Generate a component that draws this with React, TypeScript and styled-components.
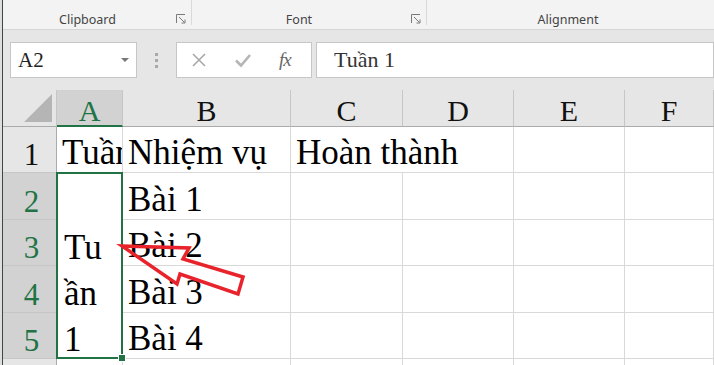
import styled, { createGlobalStyle } from "styled-components";

const GREEN = "#217346";
const SERIF = `"Liberation Serif", "Times New Roman", serif`;
const UI = `"Noto Sans", "Liberation Sans", sans-serif`;

const GlobalStyle = createGlobalStyle`
  html, body {
    margin: 0;
    padding: 0;
    background: #e4e4e4;
    overflow: hidden;
  }
`;

const Frame = styled.div`
  width: 714px;
  height: 365px;
  padding-left: 2px;
  box-sizing: border-box;
  background: #dedede;
  overflow: hidden;
`;

const Window = styled.div`
  height: 100%;
  border-left: 1px solid #3b4a40;
  display: flex;
  flex-direction: column;
  background: #e6e6e6;
`;

const Ribbon = styled.div`
  flex-shrink: 0;
  display: flex;
  height: 30px;
  background: #f3f3f3;
  border-bottom: 1px solid #d5d5d5;
  box-sizing: border-box;
`;

const Group = styled.div<{ $w?: number }>`
  display: flex;
  align-items: flex-end;
  ${(p) => (p.$w ? `width: ${p.$w}px;` : "flex: 1;")}
  padding: 0 4px 2px 0;
  box-sizing: border-box;
  & + & {
    background: linear-gradient(#dadada, #dadada) left top / 1px 25px no-repeat;
  }
`;

const GroupLabel = styled.span`
  flex: 1;
  text-align: center;
  font-family: ${UI};
  font-size: 12.5px;
  line-height: 15px;
  color: #444;
`;

const Launcher = styled.svg`
  width: 10px;
  height: 10px;
  margin: 0 1px 3px 4px;
`;

const FormulaBar = styled.div`
  flex-shrink: 0;
  display: flex;
  align-items: center;
  padding: 12px 0 12px 7px;
  height: 60px;
  box-sizing: border-box;
`;

const Field = styled.div<{ $w?: number }>`
  display: flex;
  align-items: center;
  height: 36px;
  box-sizing: border-box;
  background: #fff;
  border: 1px solid #c6c6c6;
  ${(p) => (p.$w ? `width: ${p.$w}px;` : "flex: 1;")}
`;

const NameText = styled.span`
  flex: 1;
  padding-left: 7px;
  font-family: ${SERIF};
  font-size: 21px;
  color: #222;
`;

const Caret = styled.span`
  width: 0;
  height: 0;
  border-left: 4px solid transparent;
  border-right: 4px solid transparent;
  border-top: 4px solid #777;
  margin-right: 7px;
`;

const Grip = styled.div`
  width: 39px;
  display: flex;
  flex-direction: column;
  align-items: center;
  gap: 3px;
  span {
    width: 3px;
    height: 3px;
    background: #a8a8a8;
  }
`;

const ToolButtons = styled(Field)`
  gap: 27px;
  padding-left: 14px;
  margin-right: 4px;
`;

const Fx = styled.span`
  font-family: ${SERIF};
  font-style: italic;
  font-size: 19px;
  color: #666;
  letter-spacing: -1px;
`;

const FormulaText = styled.span`
  padding-left: 17px;
  font-family: ${SERIF};
  font-size: 22px;
  color: #333;
`;

const Sheet = styled.div`
  position: relative;
  flex: 1;
  min-height: 0;
  display: grid;
  grid-template-columns: 54px 66px 168px 112px 111px 111px 1fr;
  grid-template-rows: 37px 46px 47px 46px 47px 46px 1fr;
  background: #fff;
`;

const Corner = styled.div`
  background: #e6e6e6;
  border-right: 1px solid #c6c6c6;
  border-bottom: 1px solid #ababab;
  display: flex;
  align-items: flex-end;
  justify-content: flex-end;
  padding: 0 4px 4px 0;
  box-sizing: border-box;
`;

const Triangle = styled.div`
  width: 0;
  height: 0;
  border-left: 28px solid transparent;
  border-bottom: 28px solid #b5b5b5;
`;

const ColHead = styled.div<{ $on?: boolean }>`
  display: flex;
  align-items: center;
  justify-content: center;
  box-sizing: border-box;
  background: ${(p) => (p.$on ? "#d2d2d2" : "#e6e6e6")};
  color: ${(p) => (p.$on ? GREEN : "#111")};
  border-right: 1px solid #c6c6c6;
  border-bottom: ${(p) => (p.$on ? `2px solid ${GREEN}` : "1px solid #ababab")};
  font-family: ${SERIF};
  font-size: 30px;
  padding-top: 6px;
`;

const RowHead = styled.div<{ $on?: boolean }>`
  display: flex;
  align-items: center;
  justify-content: center;
  box-sizing: border-box;
  background: ${(p) => (p.$on ? "#d2d2d2" : "#e6e6e6")};
  color: ${(p) => (p.$on ? GREEN : "#111")};
  border-right: 1px solid #ababab;
  border-bottom: 1px solid #c6c6c6;
  font-family: ${SERIF};
  font-size: 31px;
  padding: 11px 0 0 4px;
`;

const Cell = styled.div<{ $span?: number }>`
  ${(p) => (p.$span ? `grid-column: span ${p.$span};` : "")}
  display: flex;
  align-items: flex-end;
  box-sizing: border-box;
  border-right: 1px solid #d9d9d9;
  border-bottom: 1px solid #d9d9d9;
  padding: 0 0 0 5px;
  overflow: hidden;
  white-space: nowrap;
  font-family: ${SERIF};
  font-size: 35px;
  line-height: 38px;
  color: #000;
`;

const Merged = styled.div`
  position: relative;
  grid-column: 2;
  grid-row: 3 / 7;
  box-sizing: border-box;
  margin: -1px 0 0 -1px;
  border: 2px solid ${GREEN};
  display: flex;
  align-items: flex-end;
  padding: 0 0 0 6px;
  font-family: ${SERIF};
  font-size: 35px;
  line-height: 46px;
  color: #000;
`;

const MergedText = styled.span`
  margin-bottom: -6px;
`;

const FillHandle = styled.span`
  position: absolute;
  right: -5px;
  bottom: -5px;
  width: 6px;
  height: 6px;
  background: ${GREEN};
  border: 1px solid #fff;
`;

const Arrow = styled.svg`
  position: absolute;
  left: 0;
  top: 0;
  width: 300px;
  height: 275px;
  pointer-events: none;
`;

const cols = ["A", "B", "C", "D", "E", "F"];
const tasks = ["Bài 1", "Bài 2", "Bài 3", "Bài 4"];

export default function App() {
  return (
    <>
      <GlobalStyle />
      <Frame>
        <Window>
          <Ribbon>
            {[
              { label: "Clipboard", w: 188 },
              { label: "Font", w: 235 },
            ].map((g) => (
              <Group key={g.label} $w={g.w}>
                <GroupLabel>{g.label}</GroupLabel>
                <Launcher viewBox="0 0 10 10" fill="none" stroke="#7a7a7a" strokeWidth="1">
                  <path d="M0.5 9V0.5H9" />
                  <path d="M3 3l5.5 5.5M9 5.5V9H5.5" />
                </Launcher>
              </Group>
            ))}
            <Group>
              <GroupLabel>Alignment</GroupLabel>
            </Group>
          </Ribbon>

          <FormulaBar>
            <Field $w={127}>
              <NameText>A2</NameText>
              <Caret />
            </Field>
            <Grip>
              <span />
              <span />
              <span />
            </Grip>
            <ToolButtons $w={136}>
              <svg width="16" height="16" viewBox="0 0 16 16" stroke="#a9a9a9" strokeWidth="1.6">
                <path d="M2 2l12 12M14 2L2 14" />
              </svg>
              <svg width="18" height="16" viewBox="0 0 18 16" fill="none" stroke="#b5b5b5" strokeWidth="2.6">
                <path d="M2 8.5l5 5L16 3" />
              </svg>
              <Fx>fx</Fx>
            </ToolButtons>
            <Field>
              <FormulaText>Tuần 1</FormulaText>
            </Field>
          </FormulaBar>

          <Sheet>
            <Corner>
              <Triangle />
            </Corner>
            {cols.map((c) => (
              <ColHead key={c} $on={c === "A"}>
                {c}
              </ColHead>
            ))}

            <RowHead>1</RowHead>
            <Cell>Tuần</Cell>
            <Cell>Nhiệm vụ</Cell>
            <Cell $span={2}>Hoàn thành</Cell>
            <Cell />
            <Cell />

            {tasks.map((t, i) => (
              <Row key={t} n={i + 2} task={t} first={i === 0} />
            ))}

            <RowHead />
            <Cell />
            <Cell />
            <Cell />
            <Cell />
            <Cell />
            <Cell />

            <Arrow viewBox="0 0 300 275">
              <polygon
                points="119,156 186,158 180,169 240,187 235,204 177,184 174,194"
                fill="none"
                stroke="#e8232b"
                strokeWidth="3.5"
                strokeLinejoin="miter"
              />
            </Arrow>
          </Sheet>
        </Window>
      </Frame>
    </>
  );
}

function Row({ n, task, first }: { n: number; task: string; first: boolean }) {
  return (
    <>
      <RowHead $on>{n}</RowHead>
      {first && (
        <Merged>
          <MergedText>
            Tu
            <br />
            ần
            <br />1
          </MergedText>
          <FillHandle />
        </Merged>
      )}
      <Cell>{task}</Cell>
      <Cell />
      <Cell />
      <Cell />
      <Cell />
    </>
  );
}
